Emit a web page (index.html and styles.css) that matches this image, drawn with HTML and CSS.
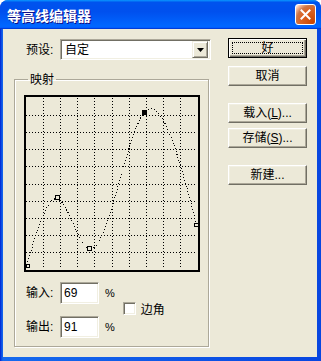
FILE: index.html
```html
<!DOCTYPE html>
<html lang="zh-CN">
<head>
  <meta charset="UTF-8" />
  <title>等高线编辑器</title>
  <link rel="stylesheet" href="styles.css">
</head>
<body>
  <div class="window">
    <div class="titlebar">
      <span class="title">等高线编辑器</span>
      <span class="close">
        <svg width="11" height="11" viewBox="0 0 11 11">
          <path d="M1.5 1.5L9.5 9.5M9.5 1.5L1.5 9.5" stroke="#fff" stroke-width="2" stroke-linecap="square"/>
        </svg>
      </span>
    </div>

    <div class="client">
      <div class="left">
        <div class="preset">
          <span class="lbl">预设:</span>
          <div class="select">
            <span class="select-value">自定</span>
            <span class="drop">
              <svg width="7" height="4" viewBox="0 0 7 4"><path d="M0 0H7L3.5 4Z" fill="#000"/></svg>
            </span>
          </div>
        </div>

        <fieldset class="group">
          <legend>映射</legend>
          <svg class="curve" width="176" height="177" viewBox="0 0 176 177">
            <rect x="1" y="1" width="174" height="175" fill="none" stroke="#000" stroke-width="2"/>
            <!-- grid -->
            <g transform="translate(2,3)" stroke="#000" stroke-dasharray="1 2" fill="none">
              <path d="M17.5 0V171M34.5 0V171M51.5 0V171M68.5 0V171M86.5 0V171M103.5 0V171M120.5 0V171M137.5 0V171M154.5 0V171"/>
              <path d="M0 17.5H171M0 34.5H171M0 51.5H171M0 68.5H171M0 86.5H171M0 103.5H171M0 120.5H171M0 137.5H171M0 154.5H171"/>
            </g>
            <!-- contour -->
            <g transform="translate(2,2)">
              <path class="line" d="M0 171C10.67 134.33 21.33 97.67 32 102C42.33 106.2 52.67 148.86 63 152C81.33 157.56 99.67 38.69 118 16C135.67 -5.87 153.33 61.56 171 129" fill="none" stroke="#000" stroke-dasharray="1 2"/>
              <rect x="0.5" y="167.5" width="3" height="3" fill="#ECE9D8" stroke="#000"/>
              <rect x="29.5" y="98.5" width="4" height="4" fill="#ECE9D8" stroke="#000"/>
              <rect x="61.5" y="149.5" width="4" height="4" fill="#ECE9D8" stroke="#000"/>
              <rect x="116" y="13" width="5" height="5" fill="#000"/>
              <rect x="168.5" y="126.5" width="4" height="3" fill="#ECE9D8" stroke="#000"/>
            </g>
          </svg>

          <div class="fields">
            <div class="rows">
              <div class="row">
                <span class="lbl">输入:</span>
                <span class="field">69</span>
                <span class="pct">%</span>
              </div>
              <div class="row">
                <span class="lbl">输出:</span>
                <span class="field">91</span>
                <span class="pct">%</span>
              </div>
            </div>
            <label class="check"><span class="box"></span>边角</label>
          </div>
        </fieldset>
      </div>

      <div class="buttons">
        <button class="btn default"><span class="focus">好</span></button>
        <button class="btn cancel">取消</button>
        <button class="btn load">载入(<u>L</u>)...</button>
        <button class="btn save">存储(<u>S</u>)...</button>
        <button class="btn new">新建...</button>
      </div>
    </div>
  </div>
</body>
</html>
```

FILE: styles.css
```css
:root {
  --face: #ECE9D8;
  --shadow: #ACA899;
  --dark: #716F64;
  --light: #F1EFE2;
  --white: #ffffff;
}

* {
  margin: 0;
  padding: 0;
  box-sizing: border-box;
}

body {
  font-family: "Liberation Sans", "Noto Sans CJK SC", sans-serif;
  font-size: 12px;
  color: #000;
  background: #ffffff;
  width: 321px;
  height: 361px;
  overflow: hidden;
}

.window {
  width: 321px;
  height: 361px;
  background: linear-gradient(to right, #0019CF 0, #0846E0 1px, #166AEE 3px, #0846E0 100%);
  border-radius: 8px 8px 0 0;
  display: flex;
  flex-direction: column;
}

.titlebar {
  height: 29px;
  display: flex;
  align-items: center;
  justify-content: space-between;
  padding: 0 5px 0 7px;
  border-radius: 8px 8px 0 0;
  background: linear-gradient(to bottom, #0997FF 0%, #0053EE 8%, #0050EE 40%, #0066FF 88%, #0066FF 93%, #005BFF 95%, #003DD7 96%, #003DD7 100%);
}

.title {
  color: var(--white);
  font-family: "Noto Sans CJK SC", sans-serif;
  font-weight: 700;
  font-size: 14px;
  line-height: 16px;
  text-shadow: 1px 1px 0 #0F1089;
}

.close {
  width: 21px;
  height: 21px;
  border: 1px solid var(--white);
  border-radius: 3px;
  display: flex;
  align-items: center;
  justify-content: center;
  background: radial-gradient(circle at 90% 90%, #CC4600 0%, #DC6527 55%, #CD7546 70%, #FFCCB2 90%, #ffffff 100%);
}

.client {
  flex: 1;
  margin: 0 4px 4px 3px;
  background: var(--face);
  display: flex;
  padding: 9px 0 0 11px;
}

.left {
  width: 198px;
}

.preset {
  display: flex;
  align-items: center;
  margin-top: 1px;
  padding-left: 12px;
  height: 21px;
}

.lbl {
  width: 34px;
  line-height: 14px;
}

.select {
  width: 151px;
  height: 21px;
  background: var(--white);
  border: 1px solid;
  border-color: var(--shadow) var(--white) var(--white) var(--shadow);
  box-shadow: inset 1px 1px 0 var(--dark), inset -1px -1px 0 var(--light);
  display: flex;
  align-items: center;
  justify-content: space-between;
  padding: 2px 2px 2px 4px;
}

.select-value {
  line-height: 14px;
}

.drop {
  width: 16px;
  height: 17px;
  background: var(--face);
  border: 1px solid;
  border-color: var(--light) var(--dark) var(--dark) var(--light);
  box-shadow: inset 1px 1px 0 var(--white), inset -1px -1px 0 var(--shadow);
  display: flex;
  align-items: center;
  justify-content: center;
}

.group {
  width: 195px;
  margin-top: 10px;
  border: 1px solid var(--shadow);
  box-shadow: inset 1px 1px 0 var(--white), 1px 1px 0 var(--white);
  padding: 7px 0 8px 9px;
}

.group legend {
  margin-left: 4px;
  padding: 0 2px;
  line-height: 16px;
  padding-top: 2px;
}

.curve {
  display: block;
}

.curve .line {
  shape-rendering: crispEdges;
}

.fields {
  display: flex;
  align-items: center;
  margin-top: 10px;
  padding-left: 2px;
}

.rows {
  display: flex;
  flex-direction: column;
  gap: 12px;
}

.row {
  display: flex;
  align-items: center;
}

.field {
  width: 39px;
  height: 22px;
  background: var(--white);
  border: 1px solid;
  border-color: var(--shadow) var(--white) var(--white) var(--shadow);
  box-shadow: inset 1px 1px 0 var(--dark), inset -1px -1px 0 var(--light);
  padding: 3px 0 0 3px;
  line-height: 14px;
}

.pct {
  margin-left: 6px;
  font-size: 11px;
}

.check {
  display: flex;
  align-items: center;
  margin: -4px 0 0 8px;
  gap: 5px;
}

.check .box {
  width: 13px;
  height: 13px;
  background: var(--white);
  border: 1px solid;
  border-color: var(--shadow) var(--white) var(--white) var(--shadow);
  box-shadow: inset 1px 1px 0 var(--dark), inset -1px -1px 0 var(--light);
}

.buttons {
  margin-left: 16px;
  display: flex;
  flex-direction: column;
}

.btn {
  width: 79px;
  height: 20px;
  font: inherit;
  color: #000;
  background: var(--face);
  border: 1px solid;
  border-color: var(--white) var(--dark) var(--dark) var(--white);
  box-shadow: inset -1px -1px 0 var(--shadow), inset 1px 1px 0 var(--light);
  display: flex;
  align-items: center;
  justify-content: center;
  line-height: 14px;
}

.btn u {
  text-underline-offset: 1px;
}

.btn.default {
  border-color: #000;
  box-shadow: inset 1px 1px 0 var(--white), inset -1px -1px 0 var(--dark), inset -2px -2px 0 var(--shadow);
}

.btn .focus {
  width: 71px;
  height: 12px;
  border: 1px dotted #000;
  display: flex;
  align-items: center;
  justify-content: center;
}

.btn.cancel {
  margin-top: 8px;
}

.btn.load {
  margin-top: 17px;
}

.btn.save {
  margin-top: 5px;
}

.btn.new {
  margin-top: 17px;
}
```
